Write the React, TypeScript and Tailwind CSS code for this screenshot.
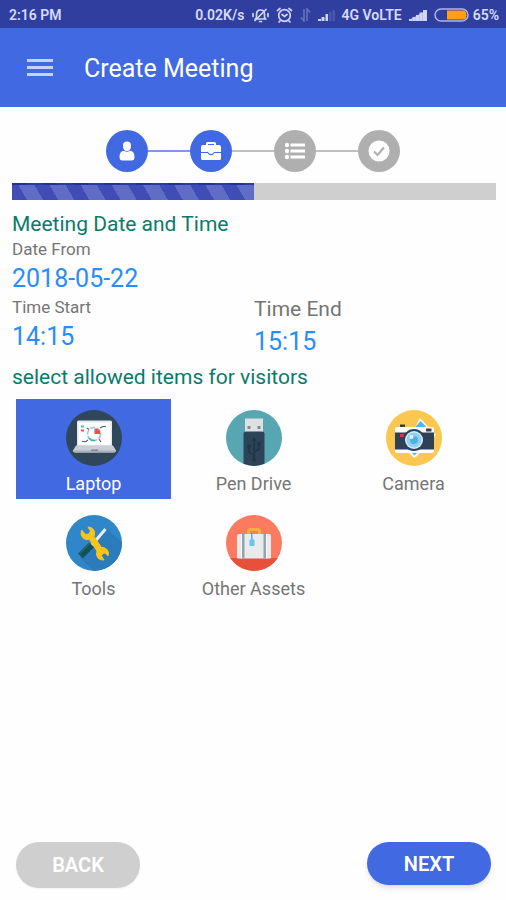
import { useState, type ReactNode } from "react";
import clsx from "clsx";

interface Item {
    id: string;
    label: string;
    icon: ReactNode;
}

/* ---------- Status bar icons ---------- */

const SilentIcon = () => (
    <svg width="17" height="16" viewBox="0 0 17 16" fill="none" stroke="#cdd5fa" strokeWidth="1.7" strokeLinecap="round">
        <path d="M4.500 10.500V7.500Q4.500 3 8.500 3T12.500 7.500v3l1 1.500h-10z" />
        <path d="M3 13.500 14 2.500M1 6.500v3M16 6.500v3M7.500 14.500h2" />
    </svg>
);

const AlarmIcon = () => (
    <svg width="17" height="16" viewBox="0 0 17 16" fill="none" stroke="#cdd5fa" strokeWidth="1.7" strokeLinecap="round">
        <circle cx="8.500" cy="8.500" r="5.800" />
        <path d="M1.500 3.500 4 1.500M15.500 3.500 13 1.500M6 7.500l2.500 2 2.500-2M4 14l-1 1M13 14l1 1" />
    </svg>
);

const DataIcon = () => (
    <svg width="11" height="14" viewBox="0 0 11 14" fill="none" stroke="#6672bd" strokeWidth="1.600">
        <path d="M4 1v12L1 9.500M7 13V1l3 3.500" />
    </svg>
);

const WeakSignalIcon = () => (
    <svg width="17" height="14" viewBox="0 0 17 14">
        <path d="M11 4h2.500v9H11zM14.500 2H17v11h-2.500z" fill="#4a58ae" />
        <path d="M0 11h3v2H0zM3.500 9h3v4h-3zM7.500 6h2.500v7H7.500z" fill="#cdd5fa" />
    </svg>
);

const SignalIcon = () => (
    <svg width="18" height="14" viewBox="0 0 18 14" fill="#cdd5fa">
        <path d="M0 11h3v2H0zM3.500 9h3v4h-3zM7 7h3v6H7zM10.500 4.500h3V13h-3zM14 2h4v11h-4z" />
        <path d="M0 12 18 2v11H0z" opacity=".75" />
    </svg>
);

const BatteryIcon = () => (
    <svg width="35" height="14" viewBox="0 0 35 14">
        <rect x="1" y="1" width="33" height="12" rx="6" fill="#303f9f" stroke="#aeb6e6" strokeWidth="1.500" />
        <path d="M13 2.500h17.500q2 1.500 2 4.500t-2 4.500H13z" fill="#ff9f0f" />
    </svg>
);

/* ---------- Step icons ---------- */

const PersonIcon = () => (
    <svg width="22" height="22" viewBox="0 0 22 22" fill="#fff">
        <path d="M7 5.500Q7 1.500 11 1.500t4 4Q15 11 11 11T7 5.500z" />
        <path d="M3.500 17q0-6 4.500-6.300 3 2 6 0 4.500.3 4.500 6.300 0 3.500-3 3.500h-9q-3 0-3-3.500z" />
    </svg>
);

const BriefcaseIcon = () => (
    <svg width="22" height="22" viewBox="0 0 22 22" fill="#fff">
        <path fillRule="evenodd" d="M6 5V3.500Q6 2 7.500 2h7Q16 2 16 3.500V5h3q2 0 2 2v5h-7q-1 2-3 2t-3-2H1V7q0-2 2-2zm2-1v1h6V4z" />
        <path d="M1 13h6.500q1.200 2.200 3.500 2.200t3.500-2.200H21v5.500q0 1.500-1.500 1.500h-17Q1 20 1 18.500z" />
    </svg>
);

const ListIcon = () => (
    <svg width="22" height="22" viewBox="0 0 22 22" fill="#fff">
        <circle cx="3" cy="5" r="2.200" />
        <circle cx="3" cy="11" r="2.200" />
        <circle cx="3" cy="17" r="2.200" />
        <path d="M6.500 3.500H21v3H6.500zM6.500 9.500H21v3H6.500zM6.500 15.500H21v3H6.500z" />
    </svg>
);

const CheckIcon = () => (
    <svg width="22" height="22" viewBox="0 0 22 22">
        <circle cx="11" cy="11" r="10.500" fill="#fff" />
        <path d="m6 11.500 3.500 3.500L16 7.500" fill="none" stroke="#afafaf" strokeWidth="2.200" />
    </svg>
);

/* ---------- Item icons ---------- */

const LaptopIcon = () => (
    <svg width="56" height="56" viewBox="0 0 56 56">
        <circle cx="28" cy="28" r="28" fill="#30465a" />
        <path d="M11 12q0-1.500 1.500-1.500h32Q46 10.500 46 12v25H11z" fill="#e4e7ec" />
        <path d="M12.500 12.500h32V35h-32z" fill="#fff" />
        <circle cx="28" cy="24" r="6.500" fill="none" stroke="#8bc9ea" strokeWidth="1.600" strokeDasharray="5 1.500" />
        <path d="M23 28q2 3 6 2.500" fill="none" stroke="#2fb5a0" strokeWidth="1.500" />
        <path d="M28.500 18.500q6 0 6 5.500h-6z" fill="#f0503c" />
        <path d="M15 20.500h3" stroke="#f0503c" strokeWidth="2" />
        <path d="M15 16.500h3" stroke="#4cc3b0" strokeWidth="2" />
        <path d="m34 18 3-1.500h3M22 30l-2 1.500h-4M21 18l2 1.500M33 29l2 3" fill="none" stroke="#56616e" strokeWidth="1.200" />
        <path d="M10 35.500h37l3 5q0 2-3 2H10q-3 0-3-2z" fill="#c9ced6" />
        <path d="M7 40.500h43q0 2-3 2H10q-3 0-3-2z" fill="#a9b0bb" />
        <path d="M25 39.500h7v1.500h-7z" fill="#7d8794" />
    </svg>
);

const PenDriveIcon = () => (
    <svg width="56" height="56" viewBox="0 0 56 56">
        <defs>
            <clipPath id="pen-clip">
                <circle cx="28" cy="28" r="28" />
            </clipPath>
        </defs>
        <g clipPath="url(#pen-clip)">
            <path d="M0 0h56v56H0z" fill="#58a6b1" />
            <path d="M19 8.500h18V23H19z" fill="#dfe0e2" />
            <path d="M21.500 16h3v3h-3zM31.500 16h3v3h-3z" fill="#85898f" />
            <path d="M17.500 24q0-2.500 2.500-2.500h16q2.500 0 2.500 2.500v32h-21z" fill="#2c4358" />
            <g fill="#22354a">
                <path d="M28 30v20M28 45l-5-3v-5M28 42l5-3v-5" fill="none" stroke="#22354a" strokeWidth="1.600" />
                <circle cx="28" cy="50" r="2" />
                <path d="m28 27 2.500 4h-5zM31 32h4v3.500h-4z" />
                <circle cx="23" cy="36.500" r="2" />
            </g>
        </g>
    </svg>
);

const CameraIcon = () => (
    <svg width="56" height="56" viewBox="0 0 56 56">
        <circle cx="28" cy="28" r="28" fill="#fac850" />
        <path d="m34 8 16 17-20 22-12-9z" fill="#f5f8fb" />
        <path d="m34.500 11 7 7H28.500z" fill="#55b4e8" />
        <path d="M14 14.500h5V17h-5z" fill="#2e4155" />
        <path d="M9 19q0-2 2-2h35q2 0 2 2v22q0 2-2 2H11q-2 0-2-2z" fill="#fff" />
        <path d="M9 22.500h39V39.500H9z" fill="#2e4155" />
        <path d="M40 18.500h5.500v3H40z" fill="#2e4155" />
        <path d="M14 24h4v3h-4z" fill="#cf4436" />
        <path d="m22 42 6 6 6-6z" fill="#f5f8fb" />
        <path d="M26 43h5l-2.500 2.500z" fill="#55b4e8" />
        <circle cx="28" cy="30" r="11" fill="#2e4155" />
        <circle cx="28" cy="30" r="9" fill="#d5ecf8" />
        <circle cx="28" cy="30" r="7.500" fill="#8fd0f3" />
        <circle cx="28" cy="30" r="4" fill="#4fb0e8" />
        <circle cx="25.500" cy="27" r="2" fill="#e2f4fd" />
    </svg>
);

const ToolsIcon = () => (
    <svg width="56" height="56" viewBox="0 0 56 56">
        <defs>
            <clipPath id="tools-clip">
                <circle cx="28" cy="28" r="28" />
            </clipPath>
        </defs>
        <g clipPath="url(#tools-clip)">
            <path d="M0 0h56v56H0z" fill="#2f86c8" />
            <path d="m40 13 20 18v29H32L14 43z" fill="#2a7cbb" />
            <path d="m26 30 13.500-16" stroke="#e9eef2" strokeWidth="3" />
            <path d="m14.500 41 11-11" stroke="#14505a" strokeWidth="6.500" />
            <path d="m13.500 38.500 10-10" stroke="#1e6668" strokeWidth="2" />
            {/* wrench */}
            <path
                d="M15.500 15Q14 20 17 23q3 2.500 6.500 1.500L31 36q-1.500 4 1 7 2.500 2.500 6 2l-2.500-4 1-2.500 3-.5 2.500 3q1.500-3.500-1-6.500-2.500-2.500-5.500-2L28 21.500q1.500-4-.5-7Q25.500 12 22 12l2.500 4-1.500 3-3.500.5z"
                fill="#fbc419"
                stroke="#fbc419"
                strokeWidth="1"
                strokeLinejoin="round"
            />
        </g>
    </svg>
);

const SuitcaseIcon = () => (
    <svg width="56" height="56" viewBox="0 0 56 56">
        <defs>
            <clipPath id="case-clip">
                <circle cx="28" cy="28" r="28" />
            </clipPath>
        </defs>
        <g clipPath="url(#case-clip)">
            <path d="M0 0h56v56H0z" fill="#fb7a60" />
            <path d="M0 43h56v13H0z" fill="#e9503a" />
            <path d="M22.500 19v-2.500q0-2 2-2h7q2 0 2 2V19" fill="none" stroke="#f5ad42" strokeWidth="3" />
            <path d="M11 21q0-2 2-2h30q2 0 2 2v22.500H11z" fill="#e8eaec" />
            <path d="M16 19h2.500v24.500H16zM37.500 19H40v24.500h-2.500z" fill="#93a3b2" />
            <path d="M15 19h1v24.500h-1zM40 19h1v24.500h-1z" fill="#f8f9fa" />
            <path d="m25.500 18 .5 6" stroke="#4aa3c8" strokeWidth="1.200" />
            <path d="m26 22.500 2.500 3V31h-5v-5.500z" fill="#6cc6ea" />
        </g>
    </svg>
);

const steps = [
    { name: "Visitor", icon: <PersonIcon />, done: true },
    { name: "Meeting", icon: <BriefcaseIcon />, done: true },
    { name: "Details", icon: <ListIcon />, done: false },
    { name: "Confirm", icon: <CheckIcon />, done: false },
];

const items: Item[] = [
    { id: "laptop", label: "Laptop", icon: <LaptopIcon /> },
    { id: "pen-drive", label: "Pen Drive", icon: <PenDriveIcon /> },
    { id: "camera", label: "Camera", icon: <CameraIcon /> },
    { id: "tools", label: "Tools", icon: <ToolsIcon /> },
    { id: "other", label: "Other Assets", icon: <SuitcaseIcon /> },
];

function StatusBar() {
    return (
        <div className="flex h-7 items-center justify-between bg-[#303f9f] pt-0.5 pr-[7px] pl-[9px] text-[14px] font-semibold text-[#d5dcfb]">
            <span>2:16 PM</span>
            <div className="flex items-center gap-[7px]">
                <span>0.02K/s</span>
                <SilentIcon />
                <AlarmIcon />
                <DataIcon />
                <WeakSignalIcon />
                <span>4G VoLTE</span>
                <SignalIcon />
                <div className="flex items-center gap-1">
                    <BatteryIcon />
                    <span>65%</span>
                </div>
            </div>
        </div>
    );
}

function Stepper() {
    return (
        <ol className="flex items-center justify-center">
            {steps.map((step, i) => (
                <li key={step.name} className="flex items-center">
                    {i > 0 && <div className={clsx("h-0.5 w-[42px]", i === 1 ? "bg-[#7f97ea]" : "bg-[#c0c0c0]")} />}
                    <div
                        aria-label={step.name}
                        className={clsx(
                            "flex size-[42px] items-center justify-center rounded-full",
                            step.done ? "bg-[#4169e1]" : "bg-[#afafaf]"
                        )}
                    >
                        {step.icon}
                    </div>
                </li>
            ))}
        </ol>
    );
}

interface FieldProps {
    id: string;
    label: string;
    value: string;
    large?: boolean;
    onChange: (value: string) => void;
}

function Field({ id, label, value, large, onChange }: FieldProps) {
    return (
        <div className="flex flex-col">
            <label htmlFor={id} className={clsx("text-[#757575]", large ? "text-[21px] leading-[27px]" : "text-[17px] leading-[22px]")}>
                {label}
            </label>
            <input
                id={id}
                type="text"
                value={value}
                onChange={(e) => onChange(e.target.value)}
                className="h-9 w-full bg-transparent pt-0.5 text-[25px] text-[#2a8cf8] outline-none"
            />
        </div>
    );
}

export default function App() {
    const [selected, setSelected] = useState<string[]>(["laptop"]);
    const [date, setDate] = useState("2018-05-22");
    const [start, setStart] = useState("14:15");
    const [end, setEnd] = useState("15:15");

    const toggle = (id: string) => {
        setSelected((prev) => (prev.includes(id) ? prev.filter((x) => x !== id) : [...prev, id]));
    };

    return (
        <div className="flex min-h-screen flex-col bg-[#fefefe] font-['Roboto',sans-serif]">
            <StatusBar />

            <header className="flex h-[79px] items-center gap-[31px] bg-[#4169e1] pt-[3px] pl-[27px]">
                <button aria-label="Open menu" className="flex w-[26px] flex-col gap-1 pb-1">
                    <span className="h-[3px] bg-[#c6d2f8]" />
                    <span className="h-[3px] bg-[#c6d2f8]" />
                    <span className="h-[3px] bg-[#c6d2f8]" />
                </button>
                <h1 className="text-[25px] text-white">Create Meeting</h1>
            </header>

            <main className="pt-[23px]">
                <Stepper />

                <div className="pt-[11px] pr-2.5 pl-3">
                    {/* Progress */}
                    <div role="progressbar" aria-label="Progress" aria-valuenow={50} className="h-[17px] bg-[#cfcfcf]">
                        <div className="h-full w-1/2 border-t-2 border-[#1522a5]/70 bg-[repeating-linear-gradient(60deg,#3f4db5_0px,#3f4db5_13px,#5f6dc5_13px,#5f6dc5_27px)]" />
                    </div>

                    <h2 className="pt-2.5 text-[21px] leading-[28px] text-[#0b7a6b]">Meeting Date and Time</h2>
                    <Field id="date" label="Date From" value={date} onChange={setDate} />
                    <div className="grid grid-cols-2">
                        <Field id="start" label="Time Start" value={start} onChange={setStart} />
                        <Field id="end" label="Time End" value={end} onChange={setEnd} large />
                    </div>
                    <h2 className="pt-1 text-[21px] leading-[28px] text-[#0b7a6b]">select allowed items for visitors</h2>
                </div>

                {/* Allowed items */}
                <div className="grid grid-cols-3 gap-[5px] pt-2 pr-[15px] pl-4">
                    {items.map((item) => {
                        const active = selected.includes(item.id);
                        return (
                            <button
                                key={item.id}
                                aria-pressed={active}
                                onClick={() => toggle(item.id)}
                                className={clsx(
                                    "flex h-[100px] flex-col items-center gap-1 pt-[11px] text-[18px] leading-[28px]",
                                    active ? "bg-[#4169e1] text-white" : "text-[#757575]"
                                )}
                            >
                                {item.icon}
                                {item.label}
                            </button>
                        );
                    })}
                </div>
            </main>

            <footer className="mt-auto flex items-start justify-between pr-[15px] pb-3 pl-4">
                <button className="h-[46px] w-[124px] rounded-full bg-[#cfcfcf] text-[20px] font-semibold text-white shadow-xs">BACK</button>
                <button className="h-[43px] w-[124px] rounded-full bg-[#4169e1] text-[20px] font-semibold text-white shadow-md">NEXT</button>
            </footer>
        </div>
    );
}
